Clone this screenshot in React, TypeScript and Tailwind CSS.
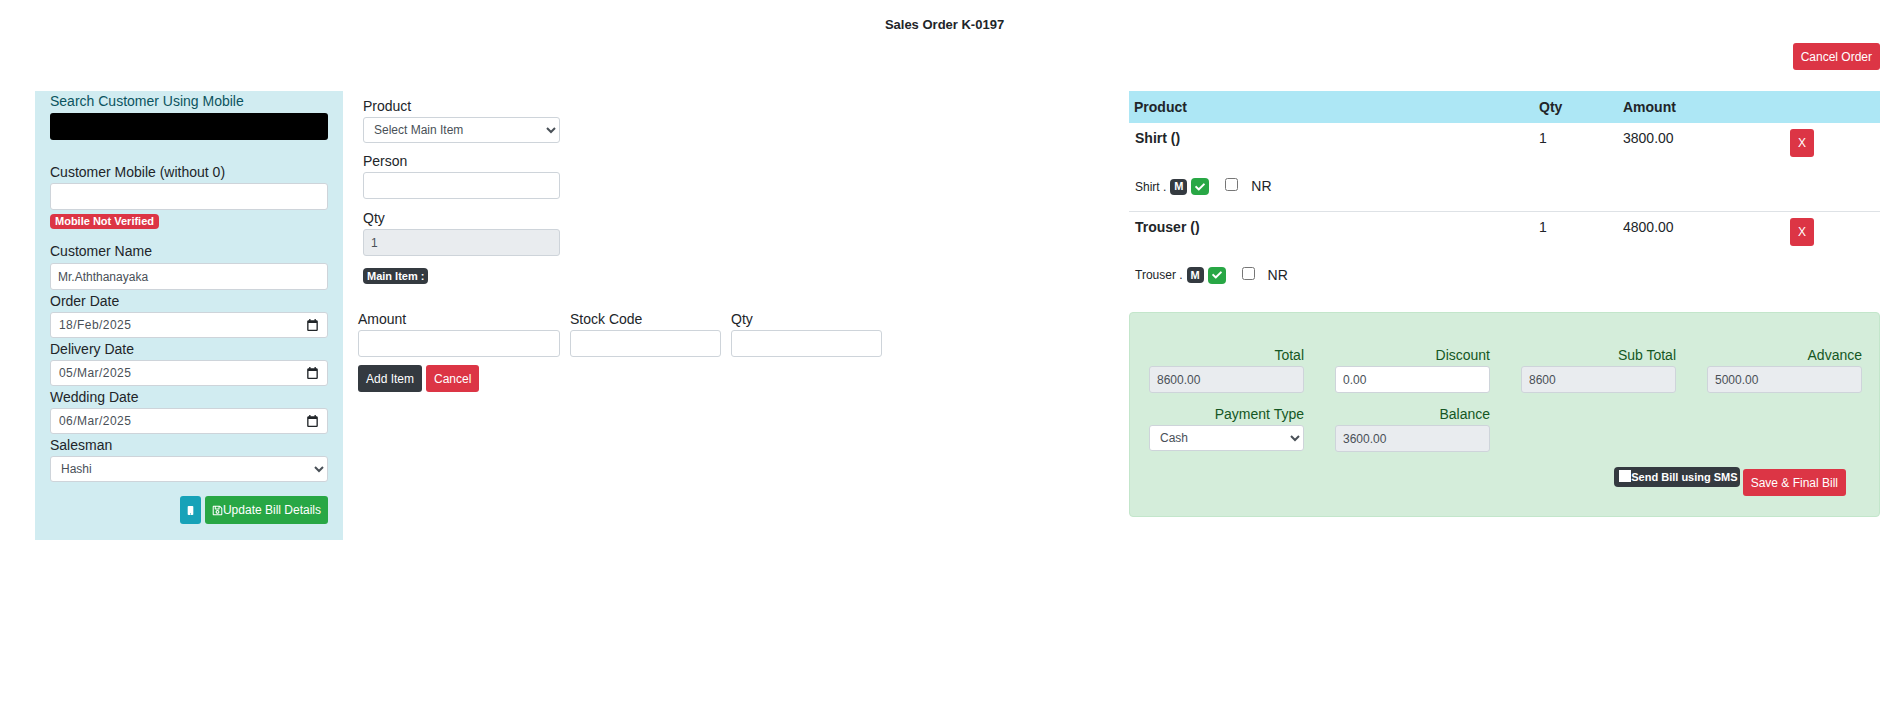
import React from "react";
import { FaRegSave, FaMobile, FaCheck } from "react-icons/fa";

const input =
  "block w-full h-[27px] px-[7px] text-[12px] text-[#495057] bg-white border border-[#ced4da] rounded-[3px] outline-none";
const disabled =
  "block w-full h-[27px] px-[7px] text-[12px] text-[#495057] bg-[#e9ecef] border border-[#ced4da] rounded-[3px] outline-none";
const select =
  "block w-full h-[26px] pl-[6px] text-[12px] text-[#495057] bg-white border border-[#ced4da] rounded-[3px] outline-none";
const label = "block text-[14px] leading-[22px] text-[#212529]";
const greenLabel = "block text-right text-[14px] leading-[22px] text-[#155724]";
const red = "bg-[#dc3545] text-white text-[12px] rounded-[3px]";

function DateField({ value }: { value: string }) {
  return (
    <div className="flex items-center justify-between h-[26px] pl-[8px] pr-[9px] text-[12px] tracking-[0.45px] text-[#495057] bg-white border border-[#ced4da] rounded-[3px]">
      <span>{value}</span>
      <svg width="11" height="12" viewBox="0 0 16 18" aria-hidden="true">
        <path
          fill="#212529"
          d="M14 2h-1V0h-2v2H5V0H3v2H2C.9 2 0 2.9 0 4v12c0 1.1.9 2 2 2h12c1.100 0 2-.9 2-2V4c0-1.100-.9-2-2-2zm0 14H2V6h12v10z"
        />
      </svg>
    </div>
  );
}

function OrderRow({
  name,
  sub,
  amount,
  last,
}: {
  name: string;
  sub: string;
  amount: string;
  last?: boolean;
}) {
  return (
    <tr className={last ? "" : "border-b border-[#dee2e6]"}>
      <td className="h-[88px] align-top pt-[5px] pl-[6px]">
        <div className="font-bold text-[14px] leading-[21px] text-[#212529]">{name}</div>
        <div className="flex items-center mt-[27px] h-[21px] text-[12px] text-[#212529]">
          <span>{sub} .</span>
          <span className="flex items-center justify-center ml-[4px] w-[17px] h-[16px] rounded-[4px] bg-[#343a40] text-white text-[11px] font-bold">
            M
          </span>
          <span className="flex items-center justify-center ml-[4px] w-[18px] h-[17px] rounded-[4px] bg-[#28a745] text-white">
            <FaCheck className="w-[10px] h-[10px]" />
          </span>
          <input type="checkbox" className="ml-[16px] mr-0 mb-[4px] w-[13px] h-[13px]" />
          <span className="ml-[13px] text-[14px]">NR</span>
        </div>
      </td>
      <td className="align-top pt-[5px] pl-[5px] text-[14px] leading-[21px] text-[#212529]">1</td>
      <td className="align-top pt-[5px] pl-[5px] text-[14px] leading-[21px] text-[#212529]">{amount}</td>
      <td className="align-top pt-[6px] pl-[5px]">
        <button className={`${red} block w-[24px] h-[28px]`}>X</button>
      </td>
    </tr>
  );
}

export default function App() {
  return (
    <div className="min-h-[716px] bg-white font-['Liberation_Sans',Arial,sans-serif] text-[#212529]">
      <h1 className="pt-[17px] text-center text-[13px] leading-[16px] font-bold text-[#212529]">
        Sales Order K-0197
      </h1>
      <div className="flex justify-end mt-[10px] pr-[9px]">
        <button className={`${red} h-[27px] px-[8px]`}>Cancel Order</button>
      </div>

      <div className="flex items-start mt-[21px] pl-[35px] pr-[9px]">
        {/* Left: customer */}
        <div className="w-[308px] h-[449px] shrink-0 bg-[#d1ecf1] pl-[15px] pr-[15px]">
          <span className="block text-[14px] leading-[21px] text-[#0c5460]">
            Search Customer Using Mobile
          </span>
          <div className="h-[27px] mt-[1px] bg-black rounded-[3px]" />
          <span className={`${label} mt-[21px]`}>Customer Mobile (without 0)</span>
          <input className={input} />
          <span className="inline-block align-top mt-[4px] px-[5px] h-[15px] leading-[15px] rounded-[4px] bg-[#dc3545] text-white text-[11px] font-bold">
            Mobile Not Verified
          </span>
          <span className={`${label} mt-[6px] mb-[1px]`}>Customer Name</span>
          <input className={input} defaultValue="Mr.Aththanayaka" />
          <span className={`${label}`}>Order Date</span>
          <DateField value="18/Feb/2025" />
          <span className={`${label}`}>Delivery Date</span>
          <DateField value="05/Mar/2025" />
          <span className={`${label}`}>Wedding Date</span>
          <DateField value="06/Mar/2025" />
          <span className={`${label}`}>Salesman</span>
          <select className={select} defaultValue="Hashi">
            <option>Hashi</option>
          </select>
          <div className="flex justify-end gap-[4px] mt-[14px]">
            <button className="flex items-center justify-center w-[21px] h-[28px] bg-[#17a2b8] text-white rounded-[3px]">
              <FaMobile className="w-[9px] h-[9px]" />
            </button>
            <button className="flex items-center h-[28px] px-[7px] bg-[#28a745] text-white text-[12px] rounded-[3px]">
              <FaRegSave className="w-[11px] h-[11px]" />
              Update Bill Details
            </button>
          </div>
        </div>

        {/* Middle: item entry */}
        <div className="w-[786px] shrink-0 pl-[15px]">
          <div className="w-[202px] pl-[5px] pt-[4px]">
            <span className={label}>Product</span>
            <select className={select} defaultValue="Select Main Item">
              <option>Select Main Item</option>
            </select>
            <span className={`${label} mt-[7px]`}>Person</span>
            <input className={input} />
            <span className={`${label} mt-[8px]`}>Qty</span>
            <input className={disabled} disabled defaultValue="1" />
            <span className="inline-block align-top mt-[12px] px-[4px] h-[16px] leading-[16px] rounded-[4px] bg-[#343a40] text-white text-[11px] font-bold">
              Main Item :
            </span>
          </div>
          <div className="flex gap-[10px] mt-[24px]">
            <div className="w-[202px]">
              <span className={label}>Amount</span>
              <input className={input} />
            </div>
            <div className="w-[151px]">
              <span className={label}>Stock Code</span>
              <input className={input} />
            </div>
            <div className="w-[151px]">
              <span className={label}>Qty</span>
              <input className={input} />
            </div>
          </div>
          <div className="flex gap-[4px] mt-[8px]">
            <button className="h-[27px] px-[8px] bg-[#343a40] text-white text-[12px] rounded-[3px]">
              Add Item
            </button>
            <button className={`${red} h-[27px] px-[8px]`}>Cancel</button>
          </div>
        </div>

        {/* Right: order */}
        <div className="flex-1 min-w-0">
          <table className="w-full table-fixed border-collapse">
            <colgroup>
              <col className="w-[405px]" />
              <col className="w-[84px]" />
              <col className="w-[167px]" />
              <col />
            </colgroup>
            <thead>
              <tr className="h-[32px] bg-[#ade7f5] text-[14px] font-bold text-[#212529]">
                <th className="pl-[5px] text-left">Product</th>
                <th className="pl-[5px] text-left">Qty</th>
                <th className="pl-[5px] text-left">Amount</th>
                <th />
              </tr>
            </thead>
            <tbody>
              <OrderRow name="Shirt ()" sub="Shirt" amount="3800.00" />
              <OrderRow name="Trouser ()" sub="Trouser" amount="4800.00" last />
            </tbody>
          </table>

          <div className="h-[205px] mt-[13px] pt-[31px] pl-[19px] bg-[#d4edda] border border-[#c3e6cb] rounded-[4px]">
            <div className="grid grid-cols-[repeat(4,155px)] gap-x-[31px] gap-y-[10px]">
              <div>
                <span className={greenLabel}>Total</span>
                <input className={disabled} disabled defaultValue="8600.00" />
              </div>
              <div>
                <span className={greenLabel}>Discount</span>
                <input className={input} defaultValue="0.00" />
              </div>
              <div>
                <span className={greenLabel}>Sub Total</span>
                <input className={disabled} disabled defaultValue="8600" />
              </div>
              <div>
                <span className={greenLabel}>Advance</span>
                <input className={disabled} disabled defaultValue="5000.00" />
              </div>
              <div>
                <span className={greenLabel}>Payment Type</span>
                <select className={select} defaultValue="Cash">
                  <option>Cash</option>
                </select>
              </div>
              <div>
                <span className={greenLabel}>Balance</span>
                <input className={disabled} disabled defaultValue="3600.00" />
              </div>
            </div>
            <div className="flex justify-end items-start gap-[3px] mt-[15px] pr-[33px]">
              <span className="flex items-center h-[20px] pr-[2px] pl-[5px] rounded-[4px] bg-[#343a40] text-white text-[11px] font-bold">
                <span className="w-[12px] h-[12px] mb-[3px] bg-white" />
                Send Bill using SMS
              </span>
              <button className={`${red} h-[27px] px-[8px] mt-[2px]`}>Save &amp; Final Bill</button>
            </div>
          </div>
        </div>
      </div>
    </div>
  );
}
